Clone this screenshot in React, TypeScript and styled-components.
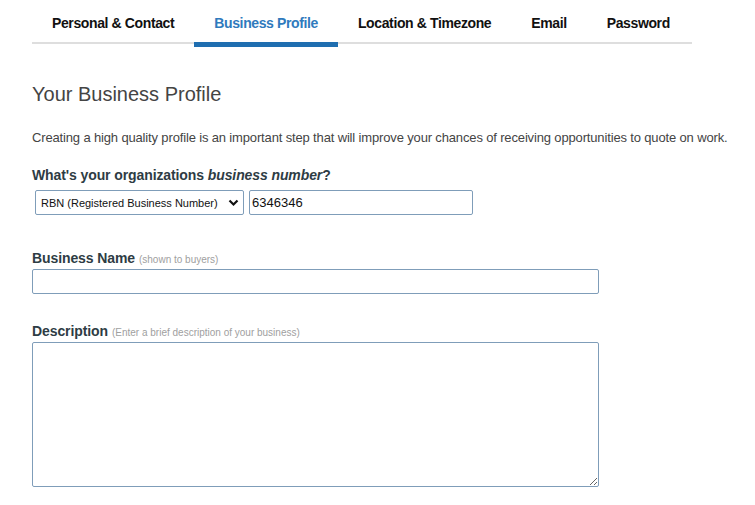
import React from "react";
import styled, { createGlobalStyle } from "styled-components";

const GlobalStyle = createGlobalStyle`
  html, body {
    margin: 0;
    padding: 0;
    background: #ffffff;
  }
  body {
    font-family: "Liberation Sans", Arial, sans-serif;
    color: #444444;
  }
`;

const Page = styled.div`
  padding: 0 0 0 32px;
  box-sizing: border-box;
`;

const TabList = styled.nav`
  display: flex;
  width: 660px;
  border-bottom: 2px solid #dedede;
`;

const Tab = styled.a<{ $active?: boolean }>`
  display: block;
  padding: 15px 20px 11px;
  line-height: 16px;
  font-size: 14px;
  letter-spacing: -0.38px;
  font-weight: bold;
  color: ${(p) => (p.$active ? "#2f7abd" : "#111111")};
  text-decoration: none;
  border-bottom: 5px solid ${(p) => (p.$active ? "#1f6eb0" : "transparent")};
  margin-bottom: -5px;
  white-space: nowrap;
  cursor: pointer;
`;

const Title = styled.h2`
  margin: 38px 0 0;
  font-size: 20px;
  line-height: 24px;
  font-weight: normal;
  color: #444444;
`;

const Intro = styled.p`
  margin: 24px 0 0;
  font-size: 13px;
  letter-spacing: -0.15px;
  line-height: 16px;
  color: #444444;
  white-space: nowrap;
`;

const Field = styled.div<{ $gap: number }>`
  margin-top: ${(p) => p.$gap}px;
`;

const Label = styled.label<{ $mb?: number }>`
  display: block;
  font-size: 14px;
  line-height: 18px;
  letter-spacing: -0.1px;
  font-weight: bold;
  color: #2e3c44;
  margin-bottom: ${(p) => p.$mb ?? 2}px;
`;

const Hint = styled.span`
  font-size: 10px;
  line-height: 1;
  letter-spacing: 0;
  font-weight: normal;
  color: #a0a0a0;
  margin-left: 4px;
`;

const Row = styled.div`
  display: flex;
  align-items: center;
  gap: 5px;
  padding-left: 3px;
`;

const SelectWrap = styled.div`
  position: relative;
  width: 209px;
  height: 25px;
`;

const Select = styled.select`
  appearance: none;
  -webkit-appearance: none;
  width: 100%;
  height: 100%;
  box-sizing: border-box;
  border: 1px solid #7f9db9;
  border-radius: 2px;
  background: #ffffff;
  padding: 0 24px 0 5px;
  font-family: "Liberation Sans", Arial, sans-serif;
  font-size: 11px;
  color: #111111;
`;

const Chevron = styled.svg`
  position: absolute;
  right: 5px;
  top: 8px;
  width: 11px;
  height: 9px;
  pointer-events: none;
`;

const TextInput = styled.input<{ $width: number }>`
  display: block;
  width: ${(p) => p.$width}px;
  height: 25px;
  box-sizing: border-box;
  border: 1px solid #7f9db9;
  border-radius: 2px;
  padding: 0 2px;
  font-family: "Liberation Sans", Arial, sans-serif;
  font-size: 13px;
  color: #111111;
  background: #ffffff;
  outline: none;
`;

const TextArea = styled.textarea`
  display: block;
  width: 567px;
  height: 145px;
  box-sizing: border-box;
  border: 1px solid #7f9db9;
  border-radius: 2px;
  padding: 2px;
  font-family: "Liberation Sans", Arial, sans-serif;
  font-size: 13px;
  background: #ffffff;
  outline: none;
`;

const tabs = [
  "Personal & Contact",
  "Business Profile",
  "Location & Timezone",
  "Email",
  "Password",
];

export default function App() {
  return (
    <>
      <GlobalStyle />
      <Page>
        <TabList>
          {tabs.map((t) => (
            <Tab key={t} $active={t === "Business Profile"}>
              {t}
            </Tab>
          ))}
        </TabList>

        <Title>Your Business Profile</Title>
        <Intro>
          Creating a high quality profile is an important step that will
          improve your chances of receiving opportunities to quote on work.
        </Intro>

        <Field $gap={20}>
          <Label $mb={6}>
            What's your organizations <i>business number</i>?
          </Label>
          <Row>
            <SelectWrap>
              <Select defaultValue="RBN">
                <option value="RBN">RBN (Registered Business Number)</option>
              </Select>
              <Chevron viewBox="0 0 11 9">
                <path
                  d="M1.5 2.5 L5.5 6.5 L9.5 2.5"
                  fill="none"
                  stroke="#111"
                  strokeWidth="2.2"
                />
              </Chevron>
            </SelectWrap>
            <TextInput $width={224} defaultValue="6346346" />
          </Row>
        </Field>

        <Field $gap={34}>
          <Label>
            Business Name<Hint>(shown to buyers)</Hint>
          </Label>
          <TextInput $width={567} />
        </Field>

        <Field $gap={28}>
          <Label>
            Description<Hint>(Enter a brief description of your business)</Hint>
          </Label>
          <TextArea />
        </Field>
      </Page>
    </>
  );
}
